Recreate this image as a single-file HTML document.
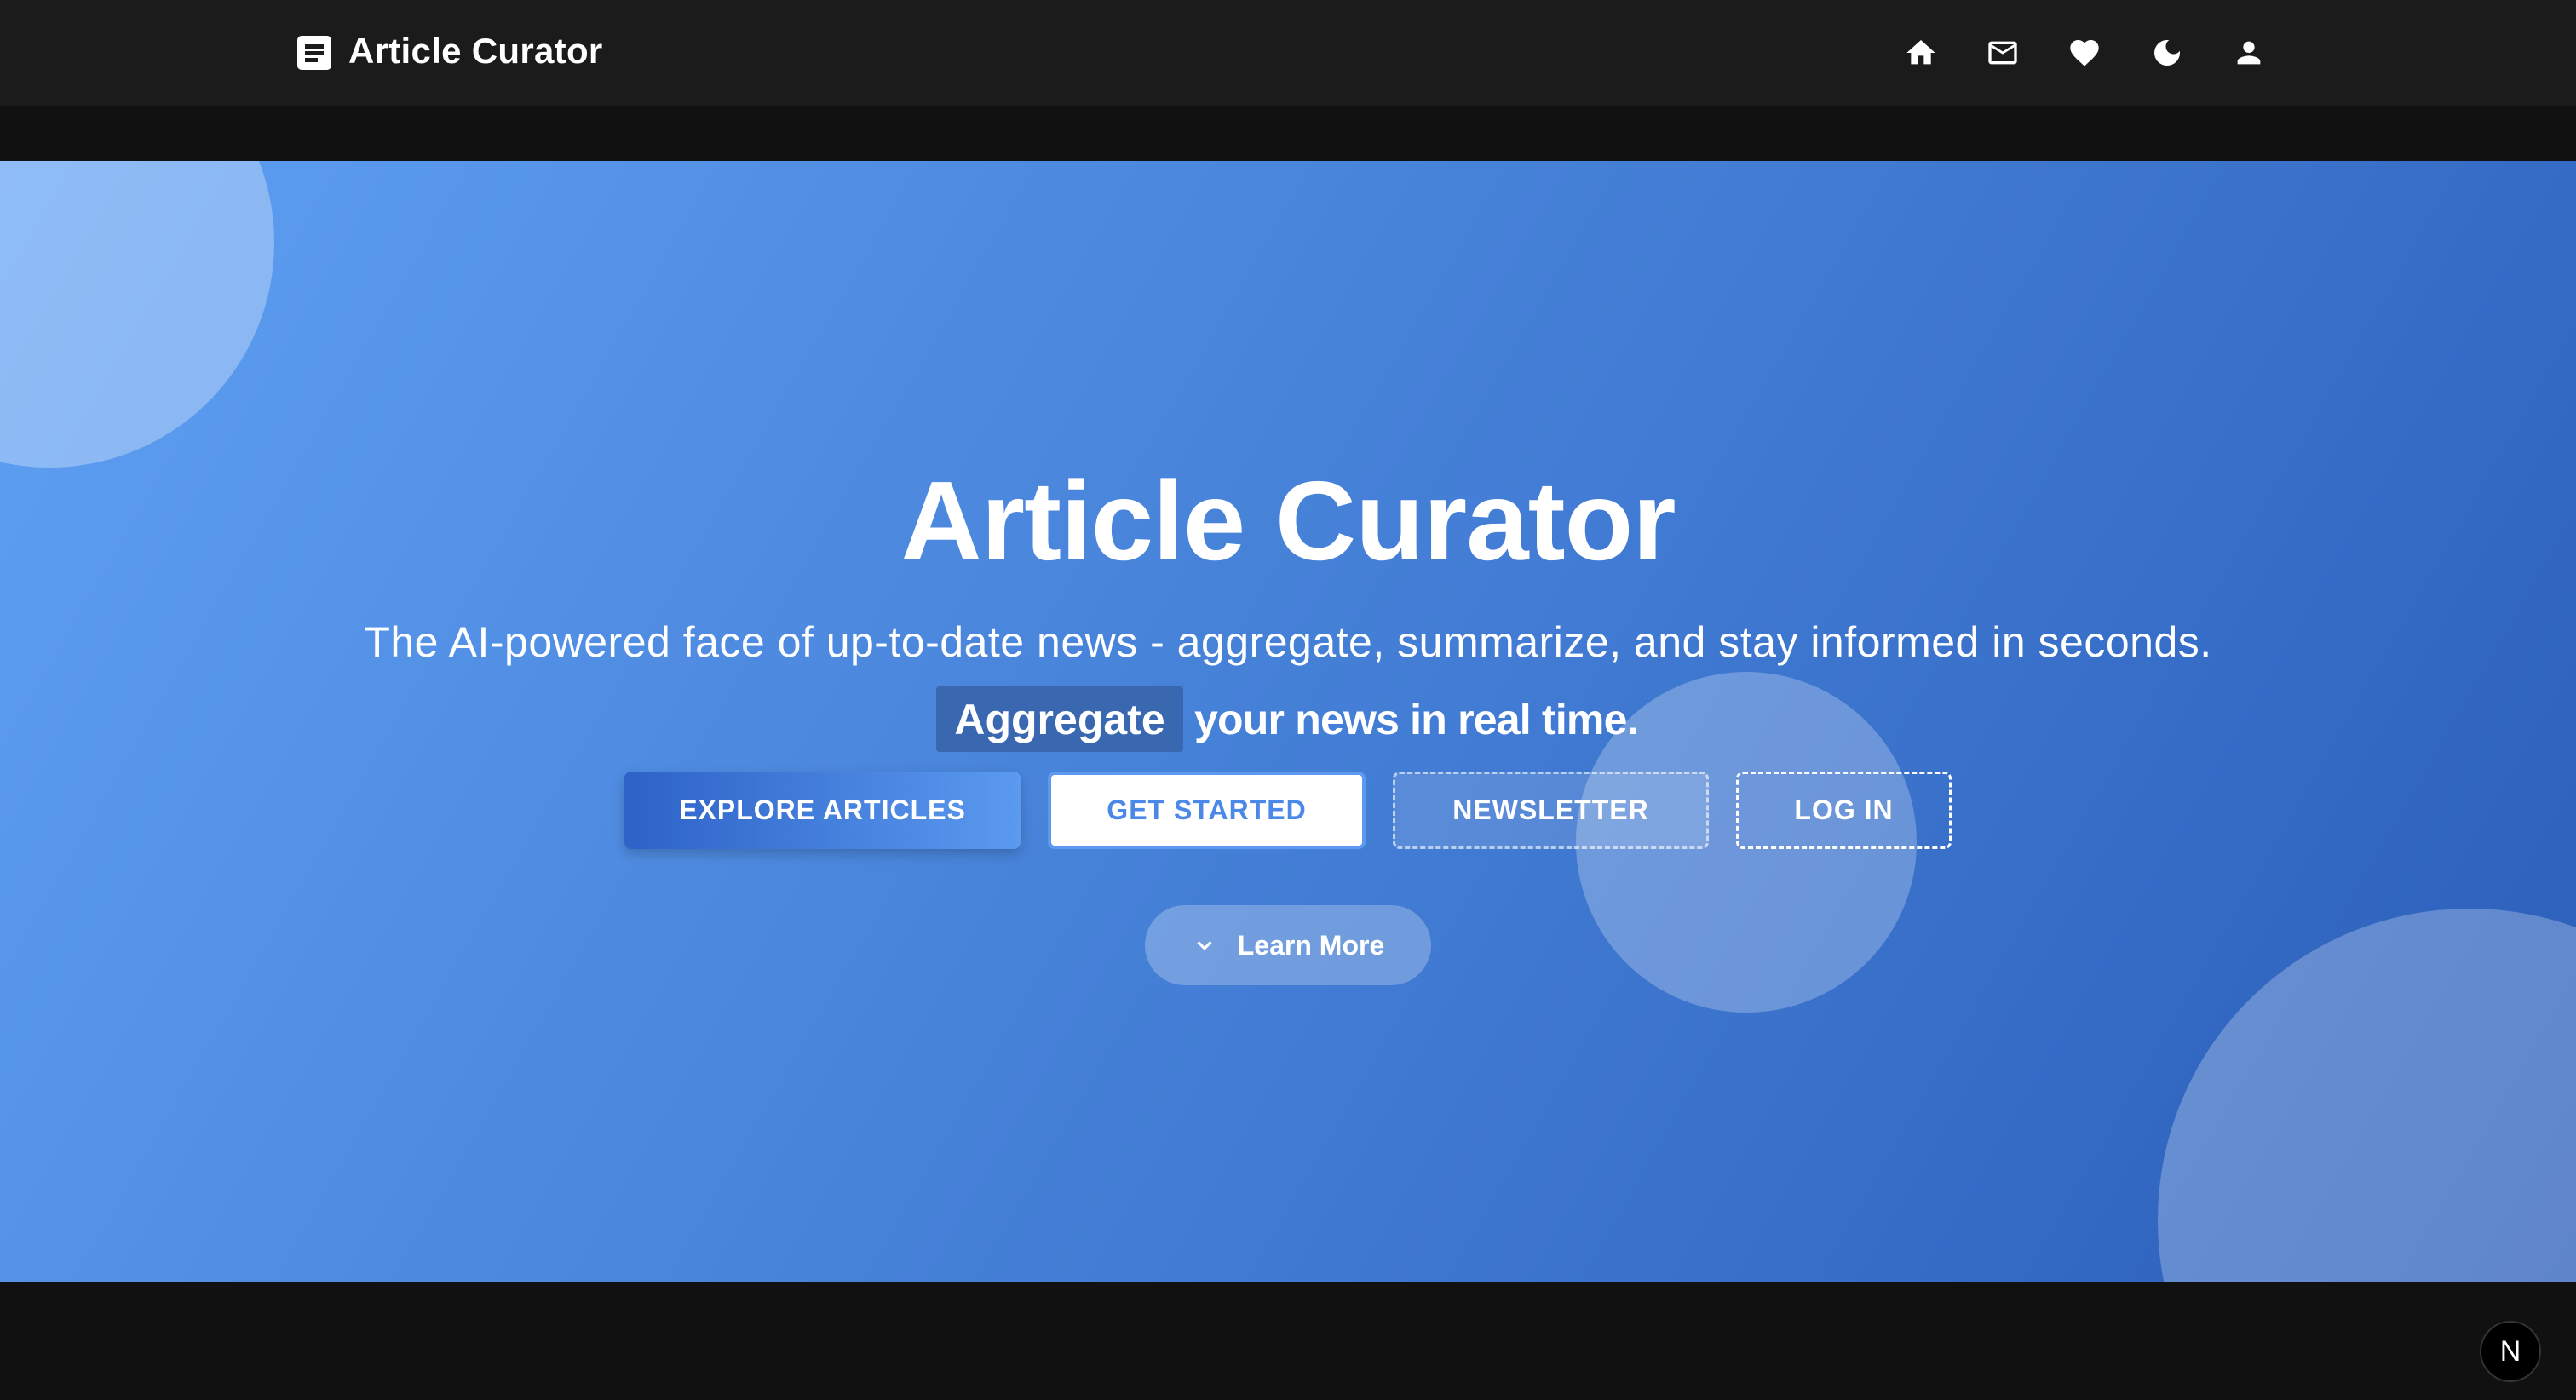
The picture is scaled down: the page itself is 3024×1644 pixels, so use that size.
<!DOCTYPE html>
<html><head><meta charset="utf-8"><style>
*{margin:0;padding:0;box-sizing:border-box}
html,body{width:3024px;height:1644px;overflow:hidden}
body{background:#111;font-family:"Liberation Sans",sans-serif;position:relative;color:#fff}
.nav{position:absolute;left:0;top:0;width:3024px;height:125px;background:#1b1b1b}
.sub{position:absolute;left:0;top:125px;width:3024px;height:64px;background:#111}
.hero{position:absolute;left:0;top:189px;width:3024px;height:1317px;background:linear-gradient(120deg,#5fa0f3 0%,#4a86dc 40%,#3a72cc 70%,#2b5db8 100%);overflow:hidden}
.c{position:absolute;border-radius:50%;background:rgba(255,255,255,.25)}
.logo{position:absolute;left:349px;top:42px;width:40px;height:40px;background:#fff;border-radius:5px}
.logo i{position:absolute;left:9px;height:5px;background:#1b1b1b}
.brand{position:absolute;left:409px;top:36px;font-size:42px;font-weight:bold;letter-spacing:0.3px}
.ic{position:absolute;top:42px;width:40px;height:40px}
.center{position:absolute;left:0;width:3024px;text-align:center;white-space:nowrap;overflow:hidden}
.btn{position:absolute;top:906px;height:91px;border-radius:8px;font-size:32px;font-weight:bold;letter-spacing:1px;display:flex;align-items:center;justify-content:center}
</style></head><body>
<div class="nav"></div><div class="sub"></div>
<div class="logo"><i style="top:10px;width:22px"></i><i style="top:18px;width:22px"></i><i style="top:26px;width:15px"></i></div>
<div class="brand">Article Curator</div>
<svg class="ic" style="left:2235px" viewBox="0 0 24 24"><path fill="#fff" d="M10 20v-6h4v6h5v-8h3L12 3 2 12h3v8z"/></svg>
<svg class="ic" style="left:2331px" viewBox="0 0 24 24"><path fill="#fff" d="M20 4H4c-1.1 0-2 .9-2 2v12c0 1.1.9 2 2 2h16c1.1 0 2-.9 2-2V6c0-1.1-.9-2-2-2zm0 14H4V8l8 5 8-5v10zm-8-7L4 6h16l-8 5z"/></svg>
<svg class="ic" style="left:2427px" viewBox="0 0 24 24"><path fill="#fff" d="M12 21.350l-1.45-1.32C5.4 15.36 2 12.28 2 8.5 2 5.42 4.42 3 7.5 3c1.74 0 3.41.81 4.5 2.09C13.09 3.81 14.76 3 16.5 3 19.58 3 22 5.42 22 8.5c0 3.78-3.4 6.86-8.55 11.54L12 21.35z"/></svg>
<svg class="ic" style="left:2524px" viewBox="0 0 24 24"><path fill="#fff" d="M12 3a9 9 0 1 0 9 9c0-.46-.04-.92-.1-1.36a5.39 5.39 0 0 1-4.4 2.26 5.4 5.4 0 0 1-3.140-9.8c-.44-.06-.9-.1-1.36-.1z"/></svg>
<svg class="ic" style="left:2620px" viewBox="0 0 24 24"><path fill="#fff" d="M12 12c2.21 0 4-1.79 4-4s-1.79-4-4-4-4 1.79-4 4 1.79 4 4 4zm0 2c-2.67 0-8 1.34-8 4v2h16v-2c0-2.66-5.33-4-8-4z"/></svg>
<div class="hero">
<div class="c" style="left:-206px;top:-168px;width:528px;height:528px;background:rgba(255,255,255,.3)"></div>
<div class="c" style="left:1850px;top:600px;width:400px;height:400px"></div>
<div class="c" style="left:2533px;top:878px;width:732px;height:732px"></div>
</div>
<div class="center" style="top:537px;font-size:132px;font-weight:bold;letter-spacing:-1px;line-height:150px">Article Curator</div>
<div class="center" style="top:724px;font-size:50px;letter-spacing:0.5px;line-height:60px">The AI-powered face of up-to-date news - aggregate, summarize, and stay informed in seconds.</div>
<div style="position:absolute;left:1099px;top:806px;width:290px;height:77px;background:#3968b0;border-radius:4px"></div>
<div style="position:absolute;left:1099px;top:812px;width:290px;text-align:center;font-size:50px;font-weight:bold;line-height:66px">Aggregate</div>
<div style="position:absolute;left:1402px;top:812px;font-size:50px;font-weight:bold;line-height:66px;letter-spacing:-.8px;white-space:nowrap">your news in real time.</div>
<div class="btn" style="left:733px;width:465px;background:linear-gradient(90deg,#2d62c7,#5b9af0);box-shadow:0 6px 14px rgba(0,0,0,.2)">EXPLORE ARTICLES</div>
<div class="btn" style="left:1230px;width:373px;background:#fff;border:4px solid #5b9af0;color:#4b88e8">GET STARTED</div>
<div class="btn" style="left:1635px;width:371px;border:3px dashed rgba(255,255,255,.6);background:rgba(255,255,255,.12)">NEWSLETTER</div>
<div class="btn" style="left:2038px;width:253px;border:3px dashed #fff">LOG IN</div>
<div style="position:absolute;left:1344px;top:1063px;width:336px;height:94px;border-radius:47px;background:rgba(255,255,255,.25);display:flex;align-items:center;justify-content:center;font-size:32px;font-weight:bold">
<svg width="30" height="30" viewBox="0 0 24 24" style="margin-right:24px"><path d="M6 9l6 6 6-6" fill="none" stroke="#fff" stroke-width="2.5"/></svg>Learn More</div>
<div style="position:absolute;left:2911px;top:1551px;width:72px;height:72px;border-radius:50%;background:#000;border:2px solid #333;display:flex;align-items:center;justify-content:center;font-size:34px">N</div>
</body></html>
